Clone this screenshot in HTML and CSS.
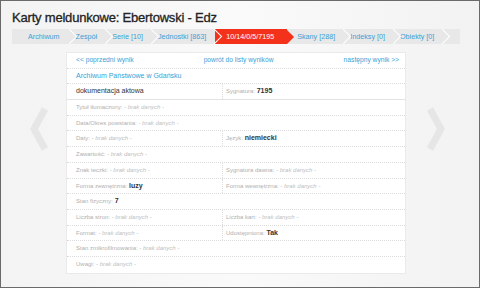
FILE: index.html
```html
<!DOCTYPE html>
<html lang="pl">
  <head>
    <meta charset="UTF-8" />
    <meta name="viewport" content="width=device-width, initial-scale=1.0" />
    <title>Karty meldunkowe</title>
    <link rel="stylesheet" href="styles.css">
  </head>

  <body>
    <div class="page">
      <h1 class="title">Karty meldunkowe: Ebertowski - Edz</h1>

      <ul class="crumbs">
        <li><a href="#">Archiwum</a></li>
        <li><a href="#">Zespół</a></li>
        <li><a href="#">Serie [10]</a></li>
        <li><a href="#">Jednostki [863]</a></li>
        <li class="active"><a href="#">10/14/0/5/7195</a></li>
        <li><a href="#">Skany [288]</a></li>
        <li><a href="#">Indeksy [0]</a></li>
        <li><a href="#">Obiekty [0]</a></li>
      </ul>

      <div class="viewer">
        <a href="#" class="side-arrow prev">
          <svg width="20" height="44" viewBox="0 0 20 44"><polyline points="16,2 5,22 16,42" fill="none" stroke="#e6e6e6" stroke-width="7" /></svg>
        </a>

        <div class="card">
          <div class="row nav-row">
            <a href="#">&lt;&lt; poprzedni wynik</a>
            <a href="#" class="back">powrót do listy wyników</a>
            <a href="#" class="next-link">następny wynik &gt;&gt;</a>
          </div>
          <div class="row"><a href="#" class="archive">Archiwum Państwowe w Gdańsku</a></div>
          <div class="row split main">
            <div class="cell"><span class="plain">dokumentacja aktowa</span></div>
            <div class="cell"><span class="label">Sygnatura:</span> <b>7195</b></div>
          </div>
          <div class="row"><span class="label">Tytuł tłumaczony:</span> <i>- brak danych -</i></div>
          <div class="row"><span class="label">Data/Okres powstania:</span> <i>- brak danych -</i></div>
          <div class="row split">
            <div class="cell"><span class="label">Daty:</span> <i>- brak danych -</i></div>
            <div class="cell"><span class="label">Język:</span> <b>niemiecki</b></div>
          </div>
          <div class="row"><span class="label">Zawartość:</span> <i>- brak danych -</i></div>
          <div class="row split">
            <div class="cell"><span class="label">Znak teczki:</span> <i>- brak danych -</i></div>
            <div class="cell"><span class="label">Sygnatura dawna:</span> <i>- brak danych -</i></div>
          </div>
          <div class="row split">
            <div class="cell"><span class="label">Forma zewnętrzna:</span> <b>luzy</b></div>
            <div class="cell"><span class="label">Forma wewnętrzna:</span> <i>- brak danych -</i></div>
          </div>
          <div class="row"><span class="label">Stan fizyczny:</span> <b>7</b></div>
          <div class="row split">
            <div class="cell"><span class="label">Liczba stron:</span> <i>- brak danych -</i></div>
            <div class="cell"><span class="label">Liczba kart:</span> <i>- brak danych -</i></div>
          </div>
          <div class="row split">
            <div class="cell"><span class="label">Format:</span> <i>- brak danych -</i></div>
            <div class="cell"><span class="label">Udostępniona:</span> <b>Tak</b></div>
          </div>
          <div class="row"><span class="label">Stan zmikrofilmowania:</span> <i>- brak danych -</i></div>
          <div class="row last"><span class="label">Uwagi:</span> <i>- brak danych -</i></div>
        </div>

        <a href="#" class="side-arrow next">
          <svg width="20" height="44" viewBox="0 0 20 44"><polyline points="4,2 15,22 4,42" fill="none" stroke="#e6e6e6" stroke-width="7" /></svg>
        </a>
      </div>
    </div>
  </body>
</html>
```

FILE: styles.css
```css
* {
  box-sizing: border-box;
}

body {
  margin: 0;
  font-family: "Liberation Sans", Arial, sans-serif;
  background: #fff;
}

.page {
  width: 480px;
  height: 288px;
  border: 1px solid #6a6a6a;
  background: linear-gradient(90deg, #f3f3f3, #fafafa 50%, #f2f2f2);
  padding: 9px 0 0 11px;
  overflow: hidden;
}

.title {
  margin: 0;
  font-size: 13px;
  font-weight: normal;
  color: #222;
  -webkit-text-stroke: 0.3px #222;
  letter-spacing: -0.2px;
  line-height: 16px;
}

.crumbs {
  list-style: none;
  margin: 3px 0 0;
  padding: 0;
  width: 448px;
  height: 15px;
  background: #e8e8e8;
  display: flex;
  overflow: hidden;
}

.crumbs li {
  position: relative;
  height: 15px;
  line-height: 15px;
  padding: 0 9px 0 6px;
  font-size: 7.2px;
}

.crumbs li:first-child {
  padding: 0 10px 0 16px;
}

.crumbs a {
  color: #3a9fd6;
  text-decoration: none;
}

.crumbs li::after {
  content: "";
  position: absolute;
  top: 2px;
  right: -5px;
  width: 10px;
  height: 10px;
  border-top: 1px solid #fff;
  border-right: 1px solid #fff;
  transform: rotate(45deg);
  z-index: 2;
}

.crumbs li.active {
  background: #f4321c;
  padding: 0 13px 0 11px;
}

.crumbs li.active a {
  color: #fff;
}

.crumbs li.active::after {
  background: #f4321c;
  border: none;
  right: -5px;
  top: 2.5px;
}

.crumbs li.active + li {
  padding-left: 10px;
}

.viewer {
  display: flex;
  align-items: flex-start;
  margin-top: 8px;
  padding-left: 17px;
}

.side-arrow {
  display: block;
  width: 20px;
  height: 44px;
  margin-top: 55px;
}

.side-arrow svg {
  display: block;
}

.card {
  width: 340px;
  margin: 0 20px 0 17px;
  background: #fff;
  border: 1px solid #eaeaea;
}

.row {
  height: 15.7px;
  line-height: 14.7px;
  padding: 0 9px;
  border-bottom: 1px dotted #dcdcdc;
  font-size: 6px;
  color: #b5b5b5;
  white-space: nowrap;
}

.row.last {
  border-bottom: none;
}

.nav-row {
  display: flex;
  padding: 0 6px 0 9px;
}

.nav-row a {
  color: #3a9fd6;
  text-decoration: none;
  font-size: 6.7px;
}

.nav-row .back {
  margin-left: 70px;
}

.nav-row .next-link {
  margin-left: auto;
}

.archive {
  color: #3a9fd6;
  text-decoration: none;
  font-size: 7px;
}

.row.split {
  display: flex;
  padding: 0;
}

.row.split .cell {
  padding: 0 9px;
}

.row.split .cell:first-child {
  width: 156px;
  border-right: 1px dotted #dcdcdc;
}

.row.split .cell:last-child {
  padding-left: 3px;
}

.row.main {
  border-bottom: 1px solid #e3e3e3;
}

.label {
  color: #b0b0b0;
}

.row i {
  color: #c0c0c0;
}

.row b {
  color: #333;
  font-size: 7px;
}

.plain {
  color: #333;
  font-size: 7px;
}
```
